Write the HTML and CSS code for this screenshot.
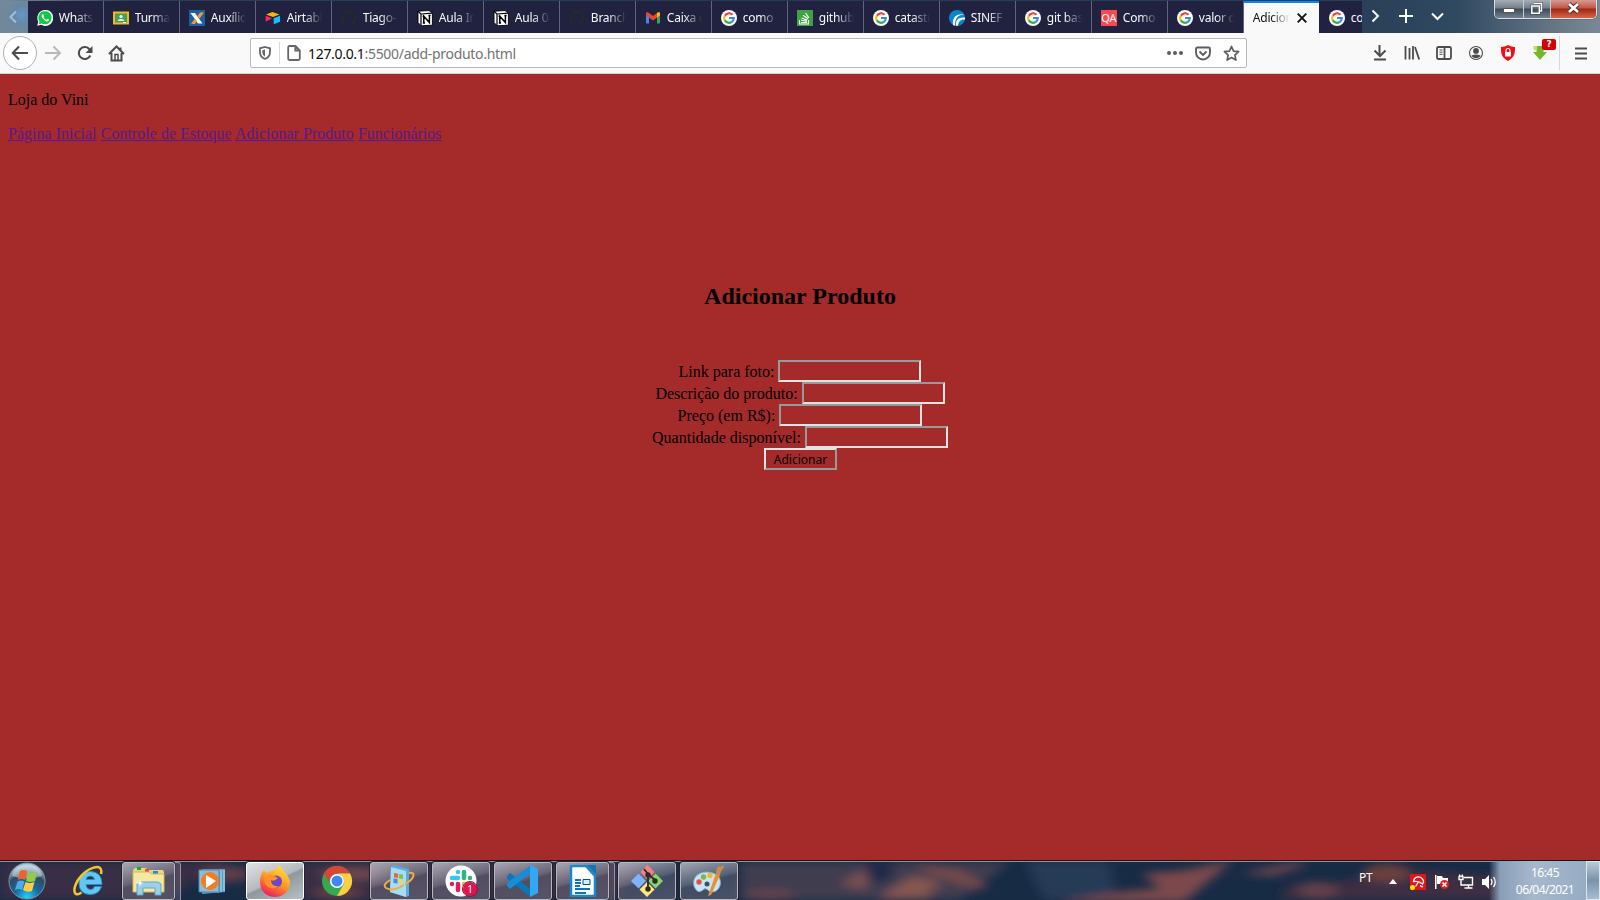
FILE: index.html
```html
<!DOCTYPE html>
<html lang="pt-BR">
<head>
<meta charset="utf-8">
<title>Adicionar Produto</title>
<link rel="stylesheet" href="styles.css">
</head>
<body>
<svg class="defs" aria-hidden="true">
  <symbol id="google" viewBox="0 0 16 16"><circle cx="8" cy="8" r="8" fill="#fff"/><g fill="none" stroke-width="2.2"><path d="M3.9 5.7A4.8 4.8 0 0 1 11.5 4.7" stroke="#ea4335"/><path d="M3.8 10.3A4.8 4.8 0 0 1 3.9 5.6" stroke="#fbbc05"/><path d="M11.3 11.5A4.8 4.8 0 0 1 3.8 10.2" stroke="#34a853"/><path d="M8 8h4.8A4.8 4.8 0 0 1 11.2 11.6" stroke="#4285f4"/></g></symbol>
  <symbol id="notion" viewBox="0 0 16 16"><path d="M1 1.2 12 .6 15.4 3v12.2L4 15.8 1 12.4z" fill="#fff" stroke="#000" stroke-width=".9"/><path d="M1 1.2 4 4v11.6M4 4l11.2-.9" fill="none" stroke="#000" stroke-width="1.2"/><path d="M6.800 13V6.200l5.600 6.400V5.500M5.600 6.200h2M11.400 5.600h2.200M5.800 13h2.200" fill="none" stroke="#000" stroke-width="1.500"/></symbol>
  <symbol id="github" viewBox="0 0 16 16"><path fill="#24292e" d="M8 .2a8 8 0 0 0-2.500 15.500c.4.1.5-.2.5-.4v-1.500c-2.200.5-2.700-1-2.700-1-.4-.9-.9-1.200-.9-1.200-.7-.5.1-.5.1-.5.8.1 1.200.8 1.200.8.7 1.200 1.900.9 2.300.7.1-.5.3-.9.5-1.100-1.800-.2-3.600-.9-3.600-4 0-.9.3-1.600.8-2.100-.1-.2-.4-1 .1-2.100 0 0 .7-.2 2.200.8a7.500 7.500 0 0 1 4 0c1.500-1 2.200-.8 2.200-.8.4 1.100.2 1.900.1 2.100.5.6.8 1.300.8 2.100 0 3.100-1.900 3.700-3.700 3.900.3.300.6.8.6 1.500v2.200c0 .2.100.5.6.4A8 8 0 0 0 8 .2z"/></symbol>
</svg>

<header class="titlebar">
  <div class="scroll-left"><svg width="8" height="14" viewBox="0 0 8 14"><path d="M7 1.500 1.500 7 7 12.500" fill="none" stroke="#9ec0dc" stroke-width="2"/></svg></div>
  <div class="tabs">
    <div class="tab"><svg class="fav" viewBox="0 0 16 16"><path d="M.2 15.800 1.300 11.800A8 8 0 1 1 4.200 14.800z" fill="#fff"/><path d="M1.800 14.200 2.500 11.500A6.600 6.600 0 1 1 4.700 13.500z" fill="#10c843"/><path d="M5.300 4.300c-1 .8-.9 2.100 0 3.500 1.200 1.900 2.700 3.200 4.500 3.600 1.200.2 2.200-.5 2.200-1.800L10.200 8.700l-1 1c-1.300-.5-2.200-1.400-2.700-2.500l.7-.9-.8-2z" fill="#fff"/></svg><span class="label">Whats</span></div>
    <div class="tab"><svg class="fav" viewBox="0 0 16 16"><path d="M0 1.500h16v13H0z" fill="#f4b91e"/><path d="M2 3.500h12v9H2z" fill="#45a05b"/><circle cx="8" cy="6.500" r="1.600" fill="#fff"/><path d="M4.700 11c0-2.600 6.600-2.600 6.600 0z" fill="#e5f3e9"/><path d="M10 12h3v1h-3z" fill="#fff"/></svg><span class="label">Turma</span></div>
    <div class="tab"><svg class="fav" viewBox="0 0 16 16"><path d="M0 0h16v16H0z" fill="#1c60a4"/><path d="M1.500 3H6l7.500 10.500H9z" fill="#fff"/><path d="M11 2.500h4L10.500 8.500 8.500 6zM6 8.500 8 11l-2 3H2z" fill="#f79b23"/></svg><span class="label">Auxílio</span></div>
    <div class="tab"><svg class="fav" viewBox="0 0 16 16"><path d="M1 4.600 7.500 2l7 2.500L8 7z" fill="#fcb400"/><path d="M8.700 8.200 15 5.800v6L8.700 14.300z" fill="#18bfff"/><path d="M.7 5.700 7 8.300.7 11.800z" fill="#f82b60"/></svg><span class="label">Airtabl</span></div>
    <div class="tab"><svg class="fav"><use href="#github"/></svg><span class="label">Tiago-</span></div>
    <div class="tab"><svg class="fav"><use href="#notion"/></svg><span class="label">Aula In</span></div>
    <div class="tab"><svg class="fav"><use href="#notion"/></svg><span class="label">Aula 04</span></div>
    <div class="tab"><svg class="fav"><use href="#github"/></svg><span class="label">Branch</span></div>
    <div class="tab"><svg class="fav" viewBox="0 0 16 16"><path d="M1 4h3v9.500H2a1 1 0 0 1-1-1z" fill="#4285f4"/><path d="M12 4h3v8.500a1 1 0 0 1-1 1h-2z" fill="#34a853"/><path d="M1 3.500C1 2 3 2 4 3l4 3 4-3c1-1 3-1 3 .5v2L8 10.500l-7-5z" fill="#ea4335"/><path d="M12 3c1-1 3-1 3 .5v2l-3 2z" fill="#fbbc04"/></svg><span class="label">Caixa d</span></div>
    <div class="tab"><svg class="fav"><use href="#google"/></svg><span class="label">como</span></div>
    <div class="tab"><svg class="fav" viewBox="0 0 16 16"><path d="M0 0h16v16H0z" fill="#41a142"/><path d="M2.500 10v4h9v-4M4 12.500h6M4 10.300l6 .8M4.500 8l5.700 1.900M6 5.200l5 3.500M8.500 3l3.400 4.900" fill="none" stroke="#fff" stroke-width="1.100"/></svg><span class="label">github</span></div>
    <div class="tab"><svg class="fav"><use href="#google"/></svg><span class="label">catastr</span></div>
    <div class="tab"><svg class="fav" viewBox="0 0 16 16"><circle cx="8" cy="8" r="8" fill="#0787ca"/><path d="M4 15C3 8 7 3 15.500 4.500 9 4.500 6 8 6 15.800M7 15.800C6.500 10 9 7 16 7.500v2c-4-.5-6.500 1.500-7 6.300" fill="#fff"/></svg><span class="label">SINEF -</span></div>
    <div class="tab"><svg class="fav"><use href="#google"/></svg><span class="label">git bas</span></div>
    <div class="tab"><span class="fav qa">QA</span><span class="label">Como</span></div>
    <div class="tab"><svg class="fav"><use href="#google"/></svg><span class="label">valor d</span></div>
    <div class="tab active"><span class="label">Adicion</span><svg class="close" viewBox="0 0 10 10"><path d="m.7.700 8.600 8.600M9.300.700.7 9.300" stroke="#111" stroke-width="1.900"/></svg></div>
    <div class="tab last"><svg class="fav"><use href="#google"/></svg><span class="label">co</span></div>
  </div>
  <svg class="tab-tools" width="80" height="33" viewBox="0 0 80 33"><path d="m10 10.500 5.500 5.500-5.500 5.500M36.500 16h14M43.500 9v14M69.500 13.500l5.500 5.500 5.500-5.500" transform="translate(.5 0)" fill="none" stroke="#fff" stroke-width="2"/></svg>
  <div class="window-buttons">
    <div class="wbtn min"><svg width="12" height="5"><rect x=".5" y=".5" width="11" height="4" fill="#fff" stroke="#555"/></svg></div>
    <div class="wbtn max"><svg width="13" height="13" viewBox="0 0 13 13"><path d="M4 1.500h7.500V9H9.500M1.800 4h7.500v7.300H1.800z" fill="none" stroke="#444" stroke-width="2.600"/><path d="M4 1.500h7.500V9H9.500M1.800 4h7.500v7.300H1.800z" fill="none" stroke="#fff" stroke-width="1.500"/></svg></div>
    <div class="wbtn shut"><svg width="13" height="12" viewBox="0 0 13 12"><path d="m2 2 9 8M11 2 2 10" stroke="#4b3030" stroke-width="4.500"/><path d="m2 2 9 8M11 2 2 10" stroke="#fff" stroke-width="2.700"/></svg></div>
  </div>
</header>

<nav class="toolbar">
  <div class="back"><svg width="18" height="16" viewBox="0 0 18 16"><path d="M17 8H2M8 1.500 1.800 8 8 14.500" fill="none" stroke="#4c4c4f" stroke-width="2.100"/></svg></div>
  <svg class="forward" width="18" height="16" viewBox="0 0 18 16"><path d="M1 8h15M9.500 1.500 16 8l-6.500 6.500" fill="none" stroke="#b9b9ba" stroke-width="2"/></svg>
  <svg class="reload" width="16" height="16" viewBox="0 0 16 16"><path d="M13.300 10.500A6 6 0 1 1 12 3.700L14 6" fill="none" stroke="#4c4c4f" stroke-width="2.100"/><path d="M15.500 1v7h-7z" fill="#4c4c4f"/></svg>
  <svg class="home" width="17" height="17" viewBox="0 0 17 17"><path d="M1 9 8.500 1.500 16 9M3.500 8v7.500h10V8M12.500 2.500v3" fill="none" stroke="#4c4c4f" stroke-width="2"/><path d="M7 15V9.500h3V15" fill="none" stroke="#4c4c4f" stroke-width="1.500"/></svg>
  <div class="urlbar">
    <svg class="shield" width="12" height="14" viewBox="0 0 12 14"><path d="M6 1 11 2.300V6c0 3.500-2 5.800-5 7-3-1.200-5-3.500-5-7V2.300z" fill="none" stroke="#666" stroke-width="1.800"/><path d="M6 3.500v7C4.200 9.500 3.300 8 3.300 6V4.200z" fill="#666"/></svg>
    <span class="divider"></span>
    <svg class="doc" width="14" height="16" viewBox="0 0 14 16"><path d="M1.200 2.500q0-1.500 1.500-1.500H8.500L12.800 5.300v8.200q0 1.500-1.500 1.500H2.700q-1.500 0-1.500-1.500zM8.300 1v4.500h4.500" fill="none" stroke="#666" stroke-width="1.800"/></svg>
    <span class="url"><b>127.0.0.1</b>:5500/add-produto.html</span>
    <svg class="dots" width="16" height="4"><g fill="#5d5d60"><circle cx="2" cy="2" r="2"/><circle cx="8" cy="2" r="2"/><circle cx="14" cy="2" r="2"/></g></svg>
    <svg class="pocket" width="16" height="15" viewBox="0 0 16 15"><path d="M2.500 1.500h11q1.500 0 1.500 1.500v3.500a7 7 0 0 1-14 0V3q0-1.500 1.500-1.500z" fill="none" stroke="#5d5d60" stroke-width="1.900"/><path d="m4.500 5.500 3.500 3.500 3.500-3.500" fill="none" stroke="#5d5d60" stroke-width="1.900"/></svg>
    <svg class="star" width="17" height="17" viewBox="0 0 17 17"><path d="m8.500 1.500 2.100 4.600 5 .6-3.700 3.400 1 5-4.400-2.500-4.400 2.500 1-5L1.400 6.700l5-.6z" fill="none" stroke="#5d5d60" stroke-width="1.700" stroke-linejoin="round"/></svg>
  </div>
  <div class="actions">
    <svg viewBox="0 0 16 16"><path d="M7 0v10M2 5.500l5.500 5.500L13 5.500M1.500 14.500h12" transform="translate(.5 0)" fill="none" stroke="#4c4c4f" stroke-width="2"/></svg>
    <svg viewBox="0 0 16 16"><path d="M1.500 1v13.500M5.500 3v11.500M9 1v13.500M11 2l4.200 12.500" fill="none" stroke="#4c4c4f" stroke-width="1.800"/></svg>
    <svg viewBox="0 0 16 16"><path d="M2.500 2h11q1.500 0 1.500 1.500v9q0 1.500-1.500 1.500h-11Q1 14 1 12.500v-9Q1 2 2.500 2zM8.500 2v12" fill="none" stroke="#4c4c4f" stroke-width="1.800"/><path d="M3.500 5h3M3.500 7.200h3M3.500 9.400h3" stroke="#4c4c4f"/></svg>
    <svg viewBox="0 0 16 16"><circle cx="8" cy="8" r="6.500" fill="none" stroke="#4c4c4f" stroke-width="1.100"/><circle cx="8" cy="5.900" r="2.900" fill="#4c4c4f"/><path d="M3.500 10.500q4.500-2 9 0C11 14 5 14 3.500 10.500z" fill="#4c4c4f"/></svg>
    <svg viewBox="0 0 16 16"><path d="M8 0q3 2 7 2c0 6 0 10-7 14C1 12 1 8 1 2q4 0 7-2z" fill="#f00d16"/><path d="M5 7h6v4.500H5z" fill="#fff"/><path d="M6 7V5.500a2 2 0 0 1 4 0V7" fill="none" stroke="#fff" stroke-width="1.200"/></svg>
    <div class="ext"><svg viewBox="0 0 16 16"><path d="M4.500 1h7v6H15l-7 8-7-8h3.500z" fill="#75b928"/><path d="M1 1h3v4H2z" fill="#b5e16c"/></svg><span class="badge">?</span></div>
  </div>
  <span class="menu-line"></span>
  <svg class="menu" width="12" height="13"><path d="M0 1.500h12M0 6.500h12M0 11.500h12" stroke="#4c4c4f" stroke-width="2"/></svg>
</nav>

<main class="page">
  <p class="brand">Loja do Vini</p>
  <div class="links"><a href="#">Página Inicial</a> <a href="#">Controle de Estoque</a> <a href="#">Adicionar Produto</a> <a href="#">Funcionários</a></div>
  <section class="content">
    <h2>Adicionar Produto</h2>
    <form>
      <div class="row"><label for="foto">Link para foto:</label><input id="foto"></div>
      <div class="row"><label for="desc">Descrição do produto:</label><input id="desc"></div>
      <div class="row"><label for="preco">Preço (em R$):</label><input id="preco"></div>
      <div class="row"><label for="qtd">Quantidade disponível:</label><input id="qtd"></div>
      <button type="button">Adicionar</button>
    </form>
  </section>
</main>

<footer class="taskbar">
  <svg class="clouds" width="1600" height="38" viewBox="0 0 1600 38" preserveAspectRatio="none">
    <defs><filter id="soft" x="-20%" y="-50%" width="140%" height="200%"><feGaussianBlur stdDeviation="6 4"/></filter></defs>
    <rect width="1600" height="38" fill="#182b45"/>
    <g filter="url(#soft)">
      <path d="M0 0h225l-60 38H0zM300 0h350l-35 38H260z" fill="#392e44"/>
      <path d="M740 0h270L960 38H740z" fill="#3f3c50"/>
      <path d="M1025 0h85l5 38h-70z" fill="#253b57"/>
      <ellipse cx="225" cy="12" rx="25" ry="8" fill="#623d4a"/><ellipse cx="350" cy="12" rx="30" ry="6" fill="#70484f"/><ellipse cx="338" cy="31" rx="24" ry="4" fill="#75453f"/>
      <path d="M840 22 870 4 865 28z" fill="#7b5052"/><ellipse cx="880" cy="7" rx="14" ry="14" fill="#242b48"/>
      <path d="m880 38 10-10 22-14 22 4 8 8-14 0 4 10z" fill="#85564f"/><path d="m915 2 45 6 28 16-12 4-46-16z" fill="#74494c"/>
      <path d="m1060 40 60-10 40-4-18-14 45-4 45-10-15 14-33 28z" fill="#7c484b"/><path d="m1242 11 55-11 10 3-35 11z" fill="#6e4650"/>
      <path d="M1290 22h40l70-15 110 8v23h-230z" fill="#3c2e42"/><ellipse cx="1387" cy="11" rx="24" ry="9" fill="#6c403e"/><ellipse cx="1318" cy="28" rx="20" ry="8" fill="#653f48"/>
      <ellipse cx="770" cy="33" rx="25" ry="5" fill="#69454d"/>
    </g>
  </svg>
  <div class="apps">
    <div class="orb"><svg width="38" height="38" viewBox="0 0 38 38"><defs><radialGradient id="orbg" cx=".5" cy=".95" r=".85"><stop offset="0" stop-color="#21d0ff"/><stop offset=".4" stop-color="#156c9f"/><stop offset=".75" stop-color="#304b62"/><stop offset="1" stop-color="#abc4d1"/></radialGradient></defs><circle cx="19" cy="19" r="18" fill="url(#orbg)" stroke="#7795a8"/><path d="M4 14C8-1 30-1 34 14q-15 5-30 0z" fill="#d7e6ed" opacity=".5"/><path d="M12 9q3-2 7 0l-2 9q-4-2-7 0z" fill="#ef632a"/><path d="M20 10q4 2 9 0l-2 9q-4 2-9 0z" fill="#96c945"/><path d="M9.500 19.500q4-2 7 0L14 28q-3-2-7 0z" fill="#52a9e7"/><path d="M17.500 20q4 2 9 0L24 29q-4 2-9-1z" fill="#ffcc42"/></svg></div>
    <div class="app"><svg width="32" height="32" viewBox="0 0 32 32"><path d="M28.500 21.500Q26 29.500 17 29.500 6 29 6 18 6 6.500 17.500 6.500 29 7 29 19.500H13q.5 5 5 5 2.500 0 3.500-3zM13 14.500h8.500Q21 11 17.300 11T13 14.500z" fill="#63c7f4" stroke="#2a8ccc"/><path d="M28 9c3-13-15-6-23 6-6 10-4 18 3.500 12.500" fill="none" stroke="#f6c628" stroke-width="2.500"/></svg></div>
    <div class="app open stacked"><svg width="34" height="30" viewBox="0 0 34 30"><path d="M1 4 3 2h11l2 2h15l1 2v19H1z" fill="#e9d588"/><path d="M5 1h4v3H5z" fill="#19a83b"/><path d="M13 3h4v3h-4z" fill="#dc5537"/><path d="M21 5h5v3h-5z" fill="#2687d4"/><path d="M1 6h16l3 2h12v18H1z" fill="#f5e8a0" stroke="#d6b75a"/><path d="M5 29V18l3-2h18l3 2v11h-6v-7H11v7z" fill="#9dcfe8" stroke="#5ca8cc"/><path d="m8 13 .8 3.200 3.200.8-3.200.8L8 21l-.8-3.200L4 17l3.200-.8z" fill="#fff"/></svg></div>
    <div class="app"><svg width="30" height="27" viewBox="0 0 30 27"><path d="M4 1h23v23l-23 2z" fill="#5b9fc6"/><path d="M23 2v22M26 2v21M20 2v23" stroke="#b5deef"/><path d="M1 2h20v22H1z" fill="#8ebcd5" stroke="#4c86ae"/><circle cx="12" cy="13" r="9" fill="#f37c21"/><path d="m8 7 10 6-10 7z" fill="#fff"/></svg></div>
    <div class="app open current"><svg width="32" height="32" viewBox="0 0 32 32"><defs><linearGradient id="fx" x1=".8" y1="0" x2=".3" y2="1"><stop stop-color="#ffe643"/><stop offset=".5" stop-color="#ff9d24"/><stop offset="1" stop-color="#ee195c"/></linearGradient></defs><path d="M20 0q4 3 5 7 5 4 6 10c0 9-7 15-15 15S1 26 1 17Q1 10 5 5q1 3 3 3 2-2 5-2 4-2 7-6z" fill="url(#fx)"/><circle cx="17" cy="16.500" r="6" fill="#7145c9"/><path d="M7 11q4-3 8 0l4 2q-4 4-7 2 0 7 8 6-9 6-14-3-2-4 1-7z" fill="#ff9324"/></svg></div>
    <div class="app"><svg width="32" height="32" viewBox="0 0 32 32"><circle cx="16" cy="16" r="15" fill="#34a853"/><path d="M3 8.500A15 15 0 0 1 29 8.500H16a7.500 7.500 0 0 0-6.500 11z" fill="#db4437"/><path d="M29 8.500A15 15 0 0 1 16 31l6.500-11.500A8 8 0 0 0 16 8.500z" fill="#ffcd40"/><circle cx="16" cy="16" r="7" fill="#fff"/><circle cx="16" cy="16" r="5.500" fill="#4285f4"/></svg></div>
    <div class="app open"><svg width="32" height="32" viewBox="0 0 32 32"><path d="m8 2 3-2 15 4v27l-3 1L7 27z" fill="#58addb"/><path d="m8 2 15 4v26L7 27z" fill="#a8dcf2"/><path d="m11 8 4 .5V13l-4-.5z" fill="#e6673b"/><path d="m16 9 4 .5V14l-4-.5z" fill="#82c24b"/><path d="m10.500 13.500 4 .5v4.500l-4-.5z" fill="#428fcd"/><path d="m15.500 14.500 4 .5v4l-4-.5z" fill="#ffd04c"/><path d="M7 15q-8 5-4 8 7 4 18-3m5-12q6-1 4 4-2 4-8 7" fill="none" stroke="#f0ad3e" stroke-width="2"/></svg></div>
    <div class="app open"><svg class="slack" width="32" height="32" viewBox="0 0 32 32"><circle cx="16" cy="16" r="15.500" fill="#fff"/><g stroke-width="4.500" stroke-linecap="round"><path d="M7 13h6M13 7h0" stroke="#36c5f0"/><path d="M19 7v6M25 13h0" stroke="#2eb67d"/><path d="M19 19h6M19 25h0" stroke="#ecb22e"/><path d="M13 19v6M7 19h0" stroke="#e01e5a"/></g></svg><span class="slack-badge">1</span></div>
    <div class="app open"><svg width="34" height="34" viewBox="0 0 34 34"><path d="m1 12 3-3 21 17v7L1 15z" fill="#0878be"/><path d="m1 22 3 3L25 9V1L1 19z" fill="#168dd5"/><path d="m24 1 8 4v24l-8 4z" fill="#32a7f3"/></svg></div>
    <div class="app open stacked"><svg width="28" height="32" viewBox="0 0 28 32"><path d="M2 1h15l9 10v20H2z" fill="#fff" stroke="#1489cf" stroke-width="2.500"/><path d="M18 0h9v9z" fill="#0879b8"/><path d="M6 15h6M6 18h6M6 21h5M6 24h15M6 28h11" stroke="#0879b8" stroke-width="1.800"/><path d="M14 14.500h7v5h-7z" fill="#d8effa" stroke="#064f7b"/></svg></div>
    <div class="app open"><svg width="34" height="34" viewBox="0 0 34 34"><path d="m17.500 1 7 7-7 8-7-8z" fill="#f98080"/><path d="m8.500 9.500 7.500 7.500-7.500 7.500L1 17z" fill="#80b3ff"/><path d="m25.500 9.500 7.500 7.500-7.500 7.500L18 17z" fill="#86d669"/><path d="m17 18 7.500 7.500L17 33l-7.500-7.500z" fill="#ffe680"/><path d="M14 5l4 5v15M18 10l7 6" fill="none" stroke="#2c2927" stroke-width="1.800"/><g fill="#2c2927"><circle cx="18" cy="11" r="2.700"/><circle cx="25" cy="17" r="2.700"/><circle cx="18" cy="25" r="2.700"/></g></svg></div>
    <div class="app open"><svg width="34" height="34" viewBox="0 0 34 34"><path d="M2 22C-1 10 13 5 23 10c9 4 6 18-3 18-4 0-4-4-8-3-5 5-8 2-10-3z" fill="#c8e5f4" stroke="#7ab0d1"/><circle cx="7" cy="18" r="2.700" fill="#e2513e"/><circle cx="11.500" cy="13" r="2.700" fill="#79b844"/><circle cx="18" cy="11.500" r="2.700" fill="#f4b630"/><circle cx="15" cy="20" r="2.500" fill="#33536c"/><path d="m24 9 4 2-9 20-3 1z" fill="#e8912f"/><path d="M24 10q0-7 3-8 1 0 1 1 3-3 4 0-3 3-4 8z" fill="#c98b50"/></svg></div>
  </div>
  <div class="tray">
    <span class="lang">PT</span>
    <svg class="up" width="8" height="5"><path d="M0 5 4 0l4 5z" fill="#fff"/></svg>
    <svg class="avira" width="16" height="16" viewBox="0 0 16 16"><path d="M0 0h16v16H0z" fill="#e3131c"/><path d="M3.500 7.500C4 3 9 1.500 12 4.500c2 2.200 1.500 4.500.5 5.500C11 8.500 7 7 3.500 7.500zM8.500 8 5.500 12.500M10.500 11q0 2 2.500 1.500" fill="none" stroke="#fff" stroke-width="1.300"/><circle cx="2.500" cy="13.500" r="2.500" fill="#f3ec00"/></svg>
    <svg class="flag" width="16" height="16" viewBox="0 0 16 16"><path d="M1 1h1.500v14H1z" fill="#fff"/><path d="M3 2h5l1 2h5v6H3z" fill="#fff"/><circle cx="10.500" cy="10.500" r="4.500" fill="#d52523"/><path d="m8.500 8.500 4 4m0-4-4 4" stroke="#fff" stroke-width="1.500"/></svg>
    <svg class="net" width="16" height="15" viewBox="0 0 16 15"><path d="M5.500 3.500h9v7.500h-9z" fill="#343440"/><path d="M6 3.500h8.500v7.500H5M10.500 11v3M6.500 14h8M3 6v5h2.500M1 2.500h4v3H1zM1.700.5v2M4.300.5v2" fill="none" stroke="#fff" stroke-width="1.400"/></svg>
    <svg class="sound" width="16" height="14" viewBox="0 0 16 14"><path d="M0 4h3l4-4v14l-4-4H0z" fill="#fff"/><path d="M9 4q2 3 0 6M11.500 2q3.500 5 0 10" fill="none" stroke="#fff" stroke-width="1.300"/></svg>
    <div class="clock"><span>16:45</span><span>06/04/2021</span></div>
    <span class="desktop"></span>
  </div>
</footer>
</body>
</html>
```
FILE: styles.css
```css
* { box-sizing: border-box; }
body { margin: 0; width: 1600px; height: 900px; overflow: hidden; display: flex; flex-direction: column; font-family: "Noto Sans", sans-serif; }
svg { display: block; flex: none; }
.defs { position: absolute; width: 0; height: 0; }

.titlebar { height: 33px; flex: none; display: flex; padding-top: 1px; background: linear-gradient(90deg, #788b9a 0, #2c4052 8%, #243c50 50%, #293e56 84%, #2f4960 91%, #6e7c8a 98%, #788896); }
.scroll-left { width: 28px; display: flex; align-items: center; padding-left: 9px; background: radial-gradient(circle at 22px 14px, #6298c4 0, #6688a5 9px, #71889a 16px); }
.tabs { display: flex; width: 1334px; overflow: hidden; flex: none; }
.tab { width: 76px; height: 32px; flex: none; display: flex; align-items: center; padding: 2px 6px 0 9px; background: #20223f; border-right: 1px solid #60637e; }
.fav { width: 16px; height: 16px; flex: none; margin-right: 6px; }
.qa { background: #f9484f; color: #fff; font-size: 11px; line-height: 16px; text-align: center; }
.label { flex: none; width: 38px; white-space: nowrap; font-size: 12px; line-height: 18px; letter-spacing: -.25px; color: #f8f8fb; -webkit-mask-image: linear-gradient(90deg, #000 45%, transparent 92%); mask-image: linear-gradient(90deg, #000 45%, transparent 92%); }
.active { width: 75px; background: #f9f9fa; border-top: 2px solid #0a84ff; border-right: 0; padding: 0 0 0 9px; }
.active .label { width: 40px; color: #111; }
.close { width: 10px; height: 10px; margin-left: 4px; }
.last { border: 0; padding-left: 10px; width: 43px; }
.last .label { width: auto; -webkit-mask-image: none; mask-image: none; }
.tab-tools { margin-top: -1px; overflow: visible; }
.window-buttons { margin: -1px 3px 0 52px; width: 104px; height: 19px; display: flex; border: 1px solid #d9dee3; border-top: 0; border-radius: 0 0 5px 5px; overflow: hidden; box-shadow: 0 0 1px #101820; }
.wbtn { display: flex; align-items: center; justify-content: center; border-right: 1px solid #c7ccd1; background: linear-gradient(#a5adb6, #727e8a 45%, #3a4a5b 50%, #74818f); }
.min { width: 29px; padding-top: 3px; }
.max { width: 27px; padding-bottom: 2px; }
.shut { flex: 1; border: 0; padding-bottom: 2px; background: linear-gradient(#d79a91, #bf5646 45%, #a32512 50%, #d16a48); }

.toolbar { height: 41px; flex: none; display: flex; align-items: center; background: #f9f9fa; border-bottom: 1px solid #d4d4d5; }
.back { width: 34px; height: 34px; margin-left: 3px; border: 1px solid #b2b2b3; border-radius: 50%; background: #fff; display: flex; align-items: center; justify-content: center; flex: none; }
.forward { margin-left: 7px; }
.reload { margin-left: 15px; }
.home { margin-left: 15px; }
.urlbar { width: 997px; height: 30px; margin-left: 125px; display: flex; align-items: center; background: #fff; border: 1px solid #b9b9ba; border-radius: 2px; flex: none; }
.shield { margin-left: 8px; }
.divider { width: 1px; height: 22px; margin: 0 7px 0 8px; background: #dadadb; }
.url { flex: 1; margin-left: 7px; padding-top: 1px; font-size: 14px; line-height: 20px; letter-spacing: -.31px; color: #737373; }
.url b { font-weight: normal; color: #0c0c0d; }
.pocket { margin-left: 12px; }
.star { margin: 0 6px 0 12px; }
.actions { display: flex; gap: 16px; margin-left: 125px; }
.actions svg { width: 16px; height: 16px; }
.ext { position: relative; }
.badge { position: absolute; left: 10px; top: -6px; width: 14px; height: 11px; border-radius: 2px; background: #d70000; color: #fff; font: bold 9px/11px "DejaVu Sans", sans-serif; text-align: center; }
.menu-line { width: 1px; height: 34px; margin-left: 11px; background: #d7d7d8; }
.menu { margin-left: 15px; }

.page { height: 786px; flex: none; padding: 17px 8px 0; background: #a52a2a; color: #000; font: 16px/18px "Liberation Serif", serif; }
.brand { margin: 0 0 16px; }
.links { height: 18px; white-space: nowrap; word-spacing: .15px; }
.links a { color: #551a8b; }
.content { display: flex; flex-direction: column; align-items: center; padding-top: 139px; }
h2 { margin: 0; font-size: 24px; line-height: 28px; }
form { display: flex; flex-direction: column; align-items: center; padding-top: 50px; }
.row { height: 22px; display: flex; align-items: center; gap: 4px; }
.row label { padding-top: 1px; }
.row input { width: 143px; height: 22px; background: transparent; border: 2px solid; border-color: #999 #e3e3e3 #e3e3e3 #999; padding: 1px; }
form button { width: 73px; height: 22px; margin-left: 1px; padding: 1px 0 0; background: transparent; border: 2px solid; border-color: #e3e3e3 #999 #999 #e3e3e3; color: #000; font: 12px/16px "Noto Sans", sans-serif; }

.taskbar { height: 40px; flex: none; position: relative; display: flex; justify-content: space-between; border-top: 1px solid #16141d; box-shadow: inset 0 1px #a58b98; overflow: hidden; }
.clouds { position: absolute; left: 0; top: 1px; }
.apps { position: relative; display: flex; gap: 4px; padding: 1px 0 0 8px; }
.orb { width: 48px; }
.app { width: 58px; height: 38px; display: flex; align-items: center; justify-content: center; border: 1px solid transparent; border-radius: 3px; position: relative; }
.open { border-color: #b9b6bf; background: linear-gradient(165deg, rgba(225,225,230,.68) 0, rgba(175,175,187,.42) 45%, rgba(120,120,136,.42) 52%, rgba(130,130,148,.45)); box-shadow: 0 0 0 1px #25232f; }
.current { border-color: #fff; background: linear-gradient(155deg, #e2e2e4 0, #b5b9be 48%, #8f989f 52%, #b7c0c7); }
.stacked { width: 53px; margin-right: 5px; }
.stacked::after { content: ""; position: absolute; left: 52px; top: -1px; width: 5px; height: 38px; border: 1px solid #96919e; border-left: 0; border-radius: 0 3px 3px 0; background: rgba(140,130,145,.3); }
.slack-badge { position: absolute; left: 30px; top: 19px; width: 14px; height: 14px; border-radius: 50%; background: #df1550; outline: 1px solid #8f1440; color: #fff; font-size: 10px; line-height: 14px; text-align: center; }
.tray { position: relative; width: 256px; display: flex; align-items: center; padding-top: 2px; color: #fff; background: linear-gradient(90deg, transparent 145px, #899eb7 156px, #a7b8cb 190px, #91a9c2); }
.lang { width: 30px; margin-left: 15px; margin-bottom: 7px; font-size: 12px; line-height: 16px; letter-spacing: -.3px; }
.avira { margin-left: 13px; }
.flag { margin-left: 8px; }
.net { margin-left: 8px; }
.sound { margin-left: 8px; }
.clock { width: 90px; margin-left: 2px; margin-top: -2px; display: flex; flex-direction: column; align-items: center; font-size: 12px; line-height: 17px; letter-spacing: -.55px; flex: none; text-align: center; }
.desktop { position: absolute; right: 0; top: 0; width: 14px; height: 39px; border: 1px solid #dbe5ee; background: linear-gradient(#b9c9d8, #7c92a8 50%, #a6bfd5); }
```
